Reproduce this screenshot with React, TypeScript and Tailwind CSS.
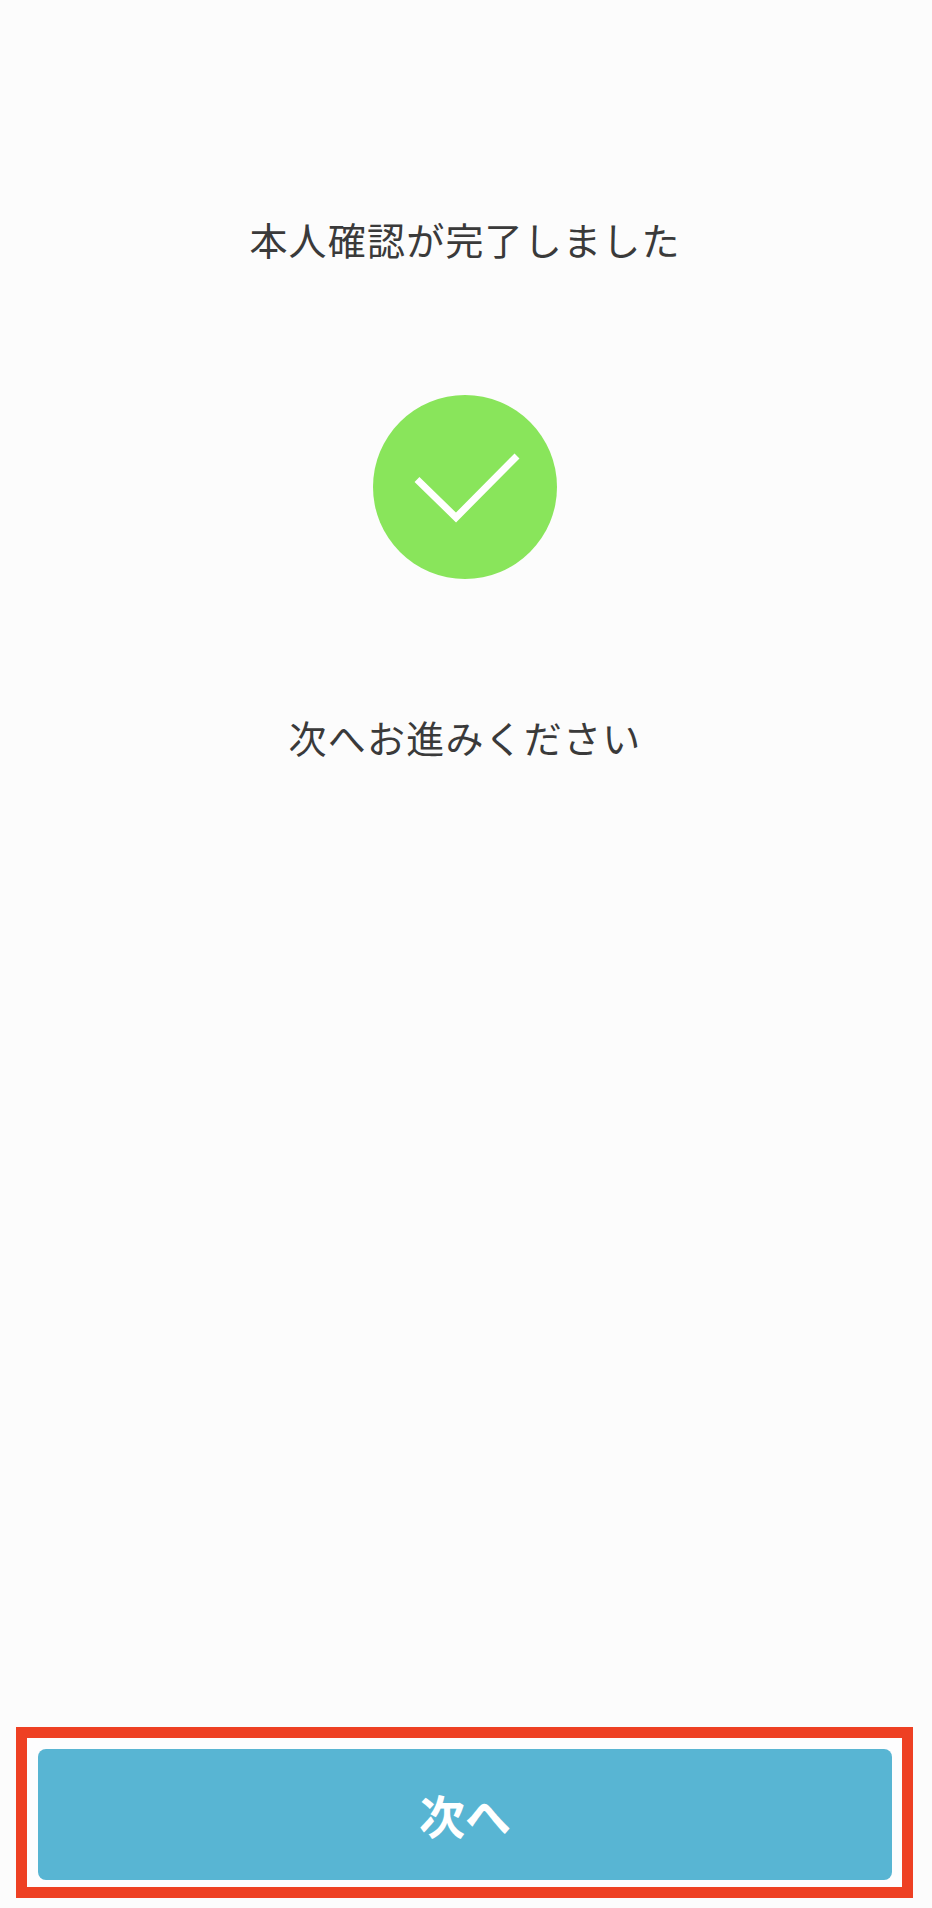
export default function App() {
  return (
    <div className="flex h-[1908px] w-[932px] flex-col bg-[#fcfcfc] font-['Noto_Sans_CJK_JP','Noto_Sans',sans-serif] text-[#3a3a3a]">
      <div className="flex w-[930px] flex-col items-center">
        <h1 className="mt-[211px] text-[38px] font-normal leading-[56px] tracking-[1.2px]">
          本人確認が完了しました
        </h1>

        <div className="mt-[128px] flex h-[184px] w-[184px] items-center justify-center rounded-full bg-[#89e55b]">
          <svg width="184" height="184" viewBox="0 0 184 184" fill="none">
            <path d="M44 84.5L83 122.5L144 61" stroke="#ffffff" strokeWidth="7" />
          </svg>
        </div>

        <p className="mt-[130px] text-[38px] leading-[56px] tracking-[1.2px]">次へお進みください</p>
      </div>

      <div className="mt-auto mb-[10px] ml-[16px] h-[171px] w-[897px] border-[11px] border-[#ee4023] bg-[#fdfdfe] pt-[11px] pr-[10px] pb-[7px] pl-[11px]">
        <button className="flex h-full w-full items-center justify-center rounded-[8px] bg-[#58b5d3] text-[46px] font-bold text-white">
          次へ
        </button>
      </div>
    </div>
  );
}
